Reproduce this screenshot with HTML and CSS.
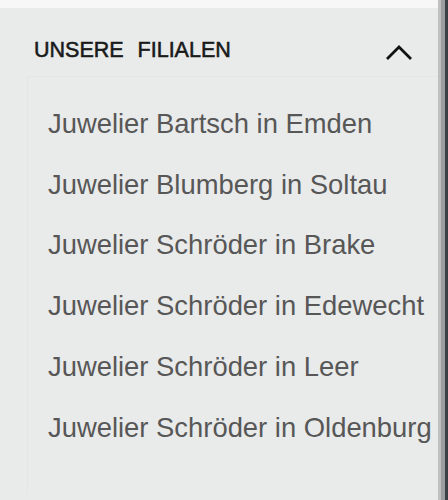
FILE: index.html
```html
<!DOCTYPE html>
<html lang="de">
<head>
    <meta charset="UTF-8">
    <meta name="viewport" content="width=device-width, initial-scale=1.0">
    <title>Unsere Filialen</title>
    <link rel="stylesheet" href="styles.css">
</head>
<body>
    <div class="page">
        <aside class="drawer">
            <div class="topbar"></div>
            <section class="accordion">
                <div class="accordion-head">
                    <h2>UNSERE FILIALEN</h2>
                    <svg class="chevron" width="28" height="18" viewBox="0 0 28 18" aria-hidden="true">
                        <polyline points="2,16 14,4 26,16" fill="none" stroke="#111" stroke-width="2.8"/>
                    </svg>
                </div>
                <ul class="store-list">
                    <li><a href="#">Juwelier Bartsch in Emden</a></li>
                    <li><a href="#">Juwelier Blumberg in Soltau</a></li>
                    <li><a href="#">Juwelier Schröder in Brake</a></li>
                    <li><a href="#">Juwelier Schröder in Edewecht</a></li>
                    <li><a href="#">Juwelier Schröder in Leer</a></li>
                    <li><a href="#">Juwelier Schröder in Oldenburg</a></li>
                </ul>
            </section>
        </aside>
        <div class="gutter"></div>
    </div>
</body>
</html>
```

FILE: styles.css
```css
body {
    margin: 0;
    background-color: #3b4045;
    font-family: "Liberation Sans", Arial, sans-serif;
}
.page {
    display: flex;
    height: 500px;
    overflow: hidden;
}
.drawer {
    width: 438px;
    flex-shrink: 0;
    display: flex;
    flex-direction: column;
    background: #e9eaea;
    border-right: 3px solid #c0c0c0;
}
.gutter {
    width: 4px;
    background: #9e9e9e;
}
.topbar {
    height: 8px;
    background: #f7f7f7;
}
.accordion {
    flex: 1;
    padding-top: 27px;
}
.accordion-head {
    display: flex;
    justify-content: space-between;
    align-items: center;
    padding: 0 25px 0 34px;
}
.accordion-head h2 {
    margin: 0;
    font-size: 21.5px;
    line-height: 30px;
    font-weight: normal;
    word-spacing: 8px;
    color: #1a1a1a;
    -webkit-text-stroke: 0.55px #1a1a1a;
}
.chevron {
    display: block;
    margin-top: 4px;
}
.store-list {
    list-style: none;
    margin: 11px 0 0 27px;
    padding: 17px 0 0 20px;
    border-top: 1px solid #e4e5e5;
    border-left: 1px solid #e4e5e5;
    height: 400px;
}
.store-list li {
    font-size: 27.4px;
    line-height: 60.7px;
    white-space: nowrap;
}
.store-list a {
    color: #575757;
    text-decoration: none;
}
```
